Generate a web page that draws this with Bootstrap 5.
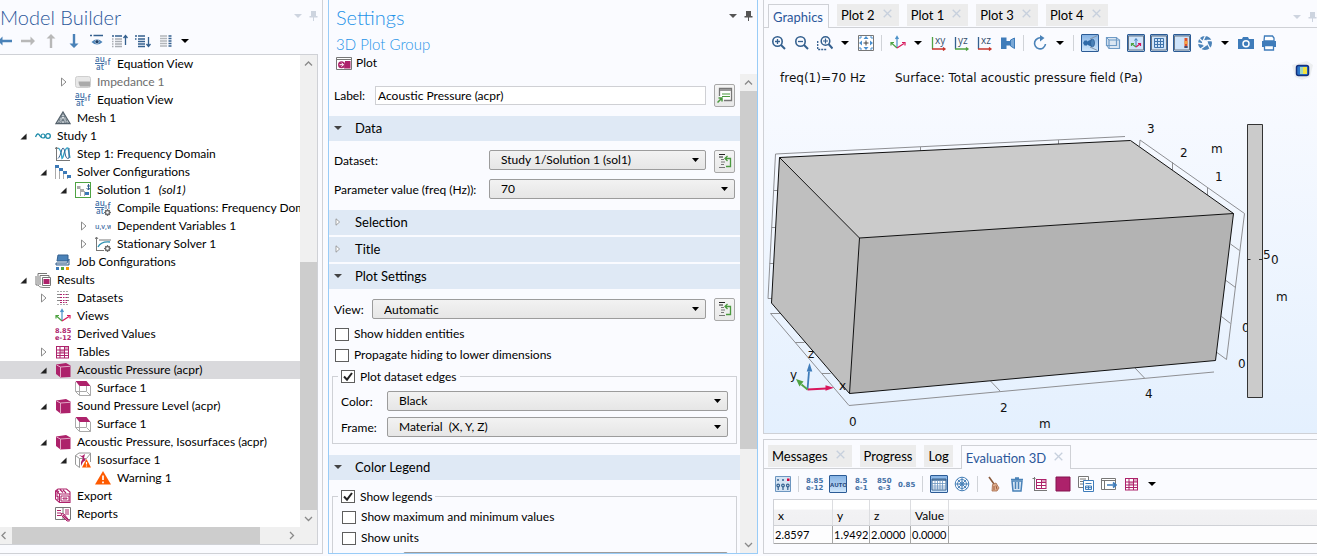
<!DOCTYPE html>
<html lang="en">
<head>
<meta charset="utf-8">
<meta name="viewport" content="width=device-width, initial-scale=1">
<title>Model Builder</title>
<link href="https://cdn.jsdelivr.net/npm/bootstrap@5.3.0/dist/css/bootstrap.min.css" rel="stylesheet">
<style>
:root{--line:#cfd1d6;--blue:#4a82b8;--navy:#34608f;--mag:#ad226b;--pane:#fafbff}
body{font:12px/18px Lato,"Open Sans",sans-serif;color:#000;background:var(--pane);overflow:hidden}
svg{display:block;flex:none}
button{color:inherit}
.ic{width:16px;height:16px}
.workspace{height:100vh;display:grid;grid-template-columns:minmax(0,323fr) minmax(0,430fr) minmax(0,554fr);gap:5px;padding-bottom:2px}
.pane{background:var(--pane);min-height:0;overflow:hidden}
.pane-title{font-size:20px;line-height:34px;font-weight:300;margin:0}
.corner{gap:7px;height:32px}
.flatbtn{border:0;background:none;padding:0;display:flex;align-items:center;justify-content:center;flex:none}
.faded{color:#cdd4df}

/* model tree */
.builder{border-right:1px solid var(--line);border-bottom:1px solid var(--line);padding:0 4px 8px 0}
.builder .pane-title{color:#2b579a}
.builder-tools{height:14px;gap:7px;margin-left:-3px}
.treebox{border:1px solid var(--line);border-left:0;background:#fff;margin-top:6px;min-height:0}
.tree{overflow:hidden;list-style:none;min-width:0}
.tree li{height:18px;white-space:nowrap}
.tree li.on{background:#d9d9dc}
.tree li.off{color:#6d6d6d}
.lv0{padding-left:18px}.lv1{padding-left:38px}.lv2{padding-left:58px}.lv3{padding-left:78px}
.twist{width:17px;height:18px;flex:none;border:0;background:none;padding:0 6px 0 0;display:flex;align-items:center;justify-content:center}
.tree .ic{margin-right:6px}
.vbar{width:17px;background:#f0f0f0;flex:none}
.hbar{height:17px;background:#f0f0f0;flex:none}
.thumb{background:#cdcdcd}
.arrowcell{width:17px;height:17px;color:#8a8a8a}

/* settings */
.settings{border:1px solid #99ccf7;border-top:0}
.settings .pane-title{color:#1f93e8}
.subtitle{font-size:15px;line-height:20px;font-weight:300;color:#1f93e8;margin:0}
.form-area{overflow:hidden;padding-top:10px;min-width:0}
.line{display:flex;padding:0 5px;gap:8px}
.line label{height:20px;line-height:22px}
.sect{height:25px;background:#dfe9f5;font-size:13px;gap:13px;padding:0 4px 0 5px;margin:0 0 2px;width:100%;border:0;display:flex;align-items:center}
.sect svg{width:8px;height:8px}
.drop{height:20px;border:1px solid #9c9c9c;border-radius:2px;padding:0 20px 0 11px;font-size:12px;line-height:17px;color:#000;background:url("data:image/svg+xml,%3Csvg xmlns='http://www.w3.org/2000/svg' width='7' height='4'%3E%3Cpath d='M0 0h7L3.5 4z'/%3E%3C/svg%3E") no-repeat right 6px center,linear-gradient(#f2f2f2,#e6e6e6);min-width:0}
.namebox{height:19px;border:1px solid #cfd0d4;border-radius:0;padding:0 2px;font-size:12px;line-height:17px;color:#000;background:#fff;min-width:0;outline:0}
.sidebtn{width:21px;height:23px;border:1px solid #a8a8a8;border-radius:2px;background:linear-gradient(#f4f4f4,#e9e9e9)}
.tick{height:21px;display:flex;align-items:center;gap:5px;padding-left:6px}
.tick input,.grp legend input{appearance:none;width:14px;height:13px;border:1px solid #5e5e5e;background:#fff;margin:0;flex:none}
input.chk:checked{background:#fff url("data:image/svg+xml,%3Csvg xmlns='http://www.w3.org/2000/svg' width='12' height='11'%3E%3Cpath d='M2 5.5l3 3.2L10 2' fill='none' stroke='%23222' stroke-width='2'/%3E%3C/svg%3E") center no-repeat}
.grp{border:1px solid var(--line);margin:0 3px;padding:0 8px 6px 5px}
.grp legend{float:none;width:auto;font-size:12px;line-height:16px;height:16px;padding:0 3px;margin:0 0 6px;display:flex;align-items:center;gap:5px}
.grp .line{padding:0 0 0 3px;gap:0}
.grp .tick{padding-left:4px}
.w46{width:46px;flex:none}.w38{width:38px;flex:none}.w155{width:155px;flex:none}.w41{width:41px;flex:none}.w66{width:62px;flex:none}

/* graphics and evaluation */
.right{display:grid;grid-template-rows:minmax(0,434fr) minmax(0,115fr);gap:5px;min-height:0;min-width:0}
.gfx{border-left:1px solid var(--line);border-bottom:1px solid var(--line)}
.eval{border-left:1px solid var(--line);border-top:1px solid var(--line);border-bottom:1px solid var(--line)}
.tabrow{border-bottom:1px solid var(--line);padding:4px 4px 0;gap:8px;height:28px;flex:none}
.eval .tabrow{height:29px;padding-top:5px}
.ptab{height:22px;background:#ececec;border:0;font-size:13px;line-height:22px;padding:0 7px 0 4px;display:flex;align-items:center;justify-content:space-between;gap:8px;white-space:nowrap;border-radius:0;color:#000;min-width:61px}
.ptab.short{min-width:0;padding-right:4px}
.ptab svg{width:9px;height:9px;margin-bottom:3px;color:#c7d0dd}
.ptab.active{height:24px;background:var(--pane);border:1px solid var(--line);border-bottom:0;color:#2b579a;margin-bottom:-1px;padding-right:4px}
.eval .ptab.active{padding-right:7px}
.tools{height:30px;padding-left:3px;flex:none}
.eval .tools{padding-left:7px}
.cell{width:23px;height:20px}
.cell.cr{width:18px}
.rule{width:9px;height:16px;background:linear-gradient(#d0d3d8,#d0d3d8) center/1px 16px no-repeat;flex:none}
.press svg{width:18px;height:18px;border:1px solid #2b5b96;border-radius:1px;background:linear-gradient(#86b3e4,#cfe6fb)}
.canvas{flex:1;min-height:0;background:linear-gradient(#fafbff,#e4f0fe)}
.canvas svg{width:100%;height:100%}
.plottext{font:12px "DejaVu Sans",sans-serif}
.gridwrap{margin-left:9px;border-left:1px solid var(--line);border-top:1px solid var(--line);background:#fff}
.values{border-collapse:separate;border-spacing:0;width:100%;table-layout:fixed}
.values th{font-weight:400;height:26px;padding:6px 4px 0;border-right:1px solid #dcdde0;border-bottom:1px solid var(--line);background:linear-gradient(#fff 35%,#f2f2f4 42%,#f0f0f2);line-height:18px}
.values td{height:18px;padding:0 1px;border-right:1px solid #a5a5a5;border-bottom:1px solid #a5a5a5;font-size:11px;line-height:17px;background:#fdfdfe}
.values th:last-child,.values td:last-child{border-right:0}
.c1{width:59px}.c2{width:37px}.c3{width:41px}.c4{width:38px}
</style>
</head>
<body>
<svg width="0" height="0" class="position-absolute" aria-hidden="true">
<defs>
<symbol id="caret" viewBox="0 0 8 8"><path d="M0 2h8L4 6z" fill="currentColor"/></symbol>
<symbol id="pin" viewBox="0 0 9 10"><path d="M2 0h5v5h1.500v1.500H5V10H4V6.500H.5V5H2z" fill="currentColor"/></symbol>
<symbol id="x" viewBox="0 0 9 9"><path d="M.7.7l7.600 7.600M8.300.7L.7 8.300" stroke="currentColor" stroke-width="1.300"/></symbol>
<symbol id="open" viewBox="0 0 8 8"><path d="M7.500.5v7H.5z" fill="#222"/></symbol>
<symbol id="shut" viewBox="0 0 8 10"><path d="M1.500 1v8L6 5z" fill="#fff" stroke="#8b8b8b"/></symbol>
<symbol id="up" viewBox="0 0 17 17"><path d="M5 10.500L8.500 7l3.500 3.500" fill="none" stroke="currentColor" stroke-width="1.300"/></symbol>
<symbol id="down" viewBox="0 0 17 17"><path d="M5 7l3.500 3.500L12 7" fill="none" stroke="currentColor" stroke-width="1.300"/></symbol>
<symbol id="left" viewBox="0 0 17 17"><path d="M10.500 5L7 8.500l3.500 3.500" fill="none" stroke="currentColor" stroke-width="1.300"/></symbol>
<symbol id="right" viewBox="0 0 17 17"><path d="M7 5l3.500 3.500L7 12" fill="none" stroke="currentColor" stroke-width="1.300"/></symbol>
<symbol id="arr" viewBox="0 0 16 16"><path d="M1 8l4.500-4.500v3.300H15v2.400H5.500v3.300z" fill="currentColor"/></symbol>
<symbol id="eye" viewBox="0 0 16 16"><path d="M1 2.500h2M4.500 2.500H14" stroke="#34608f" stroke-width="1.500"/><path d="M2.500 9Q8 3.500 13.500 9 8 14 2.500 9z" fill="#4a82b8"/><circle cx="8" cy="8.700" r="2" fill="#1e3f66" stroke="#dfe9f5" stroke-width=".6"/></symbol>
<symbol id="listup" viewBox="0 0 16 16"><path d="M0 3h2m1 0h7" stroke="#34608f" stroke-width="1.500"/><path d="M3 6h7M3 8.500h7M3 11h7M3 13.500h7M0 6h1.500M0 8.500h1.500M0 11h1.500M0 13.500h1.500" stroke="#a9adb3" stroke-width="1.300"/><path d="M13.500 12V3M11.500 5l2-2.500 2 2.500" fill="none" stroke="#34608f" stroke-width="1.300"/></symbol>
<symbol id="listdown" viewBox="0 0 16 16"><path d="M0 3h2m1 0h7M3 6h7M3 8.500h7M3 11h7M3 13.500h7M0 6h1.500" stroke="#34608f" stroke-width="1.400"/><path d="M13.500 4v9M11.500 11l2 2.500 2-2.500" fill="none" stroke="#34608f" stroke-width="1.300"/></symbol>
<symbol id="cols" viewBox="0 0 16 16"><path d="M2 3h7M2 5.500h7M2 8h7M2 10.500h7M2 13h7" stroke="#b3b6ba" stroke-width="1.300"/><path d="M10.500 3h3M10.500 5.500h3M10.500 8h3M10.500 10.500h3M10.500 13h3" stroke="#34608f" stroke-width="1.500"/></symbol>
<symbol id="eq" viewBox="0 0 16 16"><g font-family="Open Sans" font-weight="600" font-size="8" fill="#4470a6"><text x="0" y="6">au</text><text x="1" y="14">at</text><text x="12.500" y="9">f</text></g><path d="M0 7.500h9M9.500 6h2.500M9.500 8h2.500" stroke="#4470a6"/></symbol>
<symbol id="gear" viewBox="0 0 6 6"><circle cx="3" cy="3" r="1.800" fill="#fff" stroke="#6e6e6e" stroke-width="1.300"/><path d="M3 0v1M3 5v1M0 3h1M5 3h1M1 1l.6.6M5 5l-.6-.6M5 1l-.6.6M1 5l.6-.6" stroke="#6e6e6e"/></symbol>
<symbol id="imp" viewBox="0 0 16 16"><rect x=".5" y="2.500" width="15" height="11" rx="2" fill="#e8e8e8" stroke="#cfcfcf"/><path d="M3.500 7.500h11.500v5H5q-1.500-2-1.500-5z" fill="#aaa"/></symbol>
<symbol id="mesh" viewBox="0 0 16 16"><path d="M8 2L15 13.500H1z" fill="#dce2e6" stroke="#53606b" stroke-width="1.300"/><path d="M5.700 6.500h4.600M3.500 10h9M8 3l-2 4 2 3 2-3zM5.500 7l-2 6L8 10l4.500 3.500-2-6M6 13l2-3 2 3" fill="none" stroke="#66737e" stroke-width=".8"/></symbol>
<symbol id="study" viewBox="0 0 16 16"><path d="M.5 9Q2.500 3.500 5 8q1 1.500 2 1.500" fill="none" stroke="#1b8aa8" stroke-width="1.300"/><circle cx="8" cy="8" r="2" fill="none" stroke="#1b8aa8" stroke-width="1.200"/><circle cx="13" cy="8" r="2.300" fill="none" stroke="#1b8aa8" stroke-width="1.300"/></symbol>
<symbol id="step" viewBox="0 0 16 16"><path d="M1.500 1v14M0 3l1.500-2L3 3M1 14.500h14" fill="none" stroke="#777"/><path d="M3 2q3 1 4 10.500Q8 12 9 7.500 11 1 13 2l2 10" fill="none" stroke="#35a5c8" stroke-width="1.300"/><path d="M3 12.500Q5 11 7 3q2-3 3 4t4 5V2" fill="none" stroke="#34608f"/></symbol>
<symbol id="solvers" viewBox="0 0 16 16"><path d="M.5 3v12M4.500 5v10M8.500 7v8M12.500 11v4" stroke="#aaa"/><path d="M0 1h4v3H0zM4 4h4v3H4zM8 7h4v3H8zM12 11h4v3h-4z" fill="#3b79b7"/></symbol>
<symbol id="solution" viewBox="0 0 16 16"><rect x=".5" y=".5" width="15" height="15" fill="#fff" stroke="#4fa342"/><path d="M5.500 7v7M9.500 9v5" stroke="#aaa"/><path d="M2 4h3.500v3H2zM5.500 7H9v3H5.500z" fill="#aaa"/><path d="M10 10h4v3h-4z" fill="#3b79b7"/><path d="M13.500 2v6M12 4h3M11.500 6l2 2 1.500-2" stroke="#34608f" fill="none"/></symbol>
<symbol id="uvw" viewBox="0 0 16 16"><text x="0" y="10.500" font-family="Open Sans" font-size="7" font-weight="600" fill="#4470a6">u,v,w</text></symbol>
<symbol id="stat" viewBox="0 0 16 16"><path d="M1.500 1v14M0 3l1.500-2L3 3M1 14.500h8M4 4h12" fill="none" stroke="#777"/><path d="M3 11Q6 5 15 6" fill="none" stroke="#2d8fb0" stroke-width="1.300"/></symbol>
<symbol id="job" viewBox="0 0 16 16"><path d="M3 1h10v6H2z" fill="#4a82b8" stroke="#34608f"/><path d="M1 9h11l2-4v6H1z" fill="#d8dce2" stroke="#34608f"/><path d="M1 13h3v3H1z" fill="#3b79b7"/><path d="M6 13h3v3H6z" fill="#4fa342"/><path d="M11 13h3v3h-3z" fill="#f29a00"/></symbol>
<symbol id="results" viewBox="0 0 16 16"><path d="M1 4v9h3M3 12V1.500h9M5 13V3.500h9V6" fill="none" stroke="#777"/><path d="M7.500 5.500h8v8h-8z" fill="#fff" stroke="#777"/><path d="M8.500 7h6v5h-6z" fill="#ad226b"/><path d="M3 13q1 2.500 5 2.500h7" stroke="#888" fill="none"/></symbol>
<symbol id="datasets" viewBox="0 0 16 16"><path d="M2 4.500h3M2 7.500h3M2 10.500h3M12 4.500h2M12 7.500h2M12 10.500h2" stroke="#888"/><path d="M5 4.500h2M8 4.500h1.500M10.500 4.500h1.500M5 7.500h2M8 7.500h1.500M10.500 7.500h1.500M5 10.500h2M8 10.500h1.500M10.500 10.500h1.500M5 12.500h2M8 12.500h1.500M10.500 12.500h1.500" stroke="#ad226b"/><path d="M2 1.500h12M2 14.500h12" stroke="#aaa" stroke-dasharray="2 1"/></symbol>
<symbol id="axes" viewBox="0 0 16 16"><path d="M7 12V2M5.500 4L7 1.500 8.500 4" fill="none" stroke="#4a90c8" stroke-width="1.200"/><path d="M7 13L1.500 8M1 10.500V7.500H4" fill="none" stroke="#4fa342" stroke-width="1.200"/><path d="M7 13l7-4.500M12 7.500h3v3" fill="none" stroke="#d8175c" stroke-width="1.200"/></symbol>
<symbol id="derived" viewBox="0 0 17 16"><g font-family="DejaVu Sans" font-size="7" font-weight="bold" fill="#ad226b"><text x="0" y="7">8.85</text><text x="0" y="14">e-12</text></g></symbol>
<symbol id="tbl" viewBox="0 0 16 16"><path d="M1 2h13v12.500H1z" fill="#ad226b"/><path d="M2 6.500h2.500V8.500H2zM2 9.500h2.500v1.500H2zM2 12h2.500v1.500H2zM5.500 9.500H9v1.500H5.500zM5.500 12H9v1.500H5.500zM10 6.500h3V8.500h-3zM10 9.500h3v1.500h-3zM10 12h3v1.500h-3zM2 3h2.500v2.500H2zM5.500 3H9v2.500H5.500z" fill="#fff"/><path d="M10 3h3v2.500h-3zM5.500 6.500H9v2H5.500z" fill="#dda5c2"/></symbol>
<symbol id="cube" viewBox="0 0 16 16"><path d="M1 2.500L11 1l4.500 2.500v11.500l-10 .5L1 12z" fill="#ad226b"/><path d="M1.500 3l4 2v10M5.500 5l9.500-.7" fill="none" stroke="#e6b6cf" stroke-width=".9"/></symbol>
<symbol id="surf" viewBox="0 0 16 16"><path d="M.5 2v9.500l4 4V6M4.500 15.500h11V6M.5 11.500h11l4 4M11.500 11V6" fill="none" stroke="#aaa"/><path d="M.5 1h11l4 5h-11z" fill="#ad226b"/></symbol>
<symbol id="iso" viewBox="0 0 16 16"><path d="M.5 3.500v9l4 3V6.500zM.5 3.500L4 1h11.500v9M4.500 6.500h7l4-5M4.500 15V7" fill="none" stroke="#999"/><path d="M4 3l3 1 3-2-1 4 2 2-3 2-2 4v-4l2-4z" fill="#ad226b"/><path d="M11.500 7L16 15.500H7z" fill="#fe5a00"/><path d="M11.500 10v2.500m0 1v1" stroke="#fff" stroke-width="1.200"/></symbol>
<symbol id="warn" viewBox="0 0 16 16"><path d="M8 1l8 13.500H0z" fill="#fe5a00"/><path d="M8 5.500v4.500m0 1.500v1.800" stroke="#fff" stroke-width="1.700"/></symbol>
<symbol id="export" viewBox="0 0 16 16"><path d="M.5 3L3 1h8.500L15 4v10.500H4.500L.5 11zM.5 3l4 3h10M4.500 6v8.500M2 2.500l2 1.500M5 1.500l3 3M8 2l3 3M2 5v4M3 8v4" fill="none" stroke="#ad226b" stroke-width="1.100"/><path d="M6 8h8v5H6zM8 10h4v1H8z" fill="#fff" stroke="#ad226b"/></symbol>
<symbol id="reports" viewBox="0 0 16 16"><path d="M.5 1.500h15v12H.5zM8 2v11" fill="#fff" stroke="#777"/><path d="M2 4.500h4M2 7h4M2 9.500h4M10 4h4M10 6h4M10 8h4" stroke="#ad226b"/><path d="M6 7.500l3 .5 5.500 7H12L7 10z" fill="#fff" stroke="#ad226b"/><path d="M8 9l5 5" stroke="#ad226b" stroke-width="1.500"/></symbol>
<symbol id="plot" viewBox="0 0 16 13"><path d="M.5.5h15v12H.5z" fill="#fff" stroke="#777"/><path d="M1 2.500h14" stroke="#777"/><path d="M9 4h5.500v7.500H8z" fill="#ad226b"/><circle cx="5.500" cy="7.700" r="3.500" fill="#ad226b"/><path d="M3.500 7.700h4M5.500 5.700l2 2-2 2" stroke="#fff" fill="none"/></symbol>
<symbol id="goto" viewBox="0 0 16 16"><path d="M2.500 9V1.500h12v12H7" fill="#fff" stroke="#777" stroke-width="1.300"/><path d="M3 3h11" stroke="#999" stroke-width="2"/><path d="M5 7h8M5 9.500h8" stroke="#4b9a3f" stroke-width="1.200"/><path d="M.5 15.500l4-4M1.500 11h3.500v3.500" fill="none" stroke="#4b9a3f" stroke-width="1.500"/></symbol>
<symbol id="jump" viewBox="0 0 16 16"><path d="M2 1.500h6M2 4h4" stroke="#222"/><path d="M4 6.500h3M4 9h4M4 11.500h3M2 14.500h6" stroke="#777"/><path d="M9 13.500h4.500V5.500H8.500M10.500 3l-2.500 2.500L10.500 8" fill="none" stroke="#4b9a3f" stroke-width="1.300"/></symbol>
<symbol id="zin" viewBox="0 0 16 16"><circle cx="6.500" cy="6.500" r="4.700" fill="none" stroke="#34608f" stroke-width="1.600"/><path d="M10 10l4 4" stroke="#34608f" stroke-width="2"/><path d="M4 6.500h5M6.500 4v5" stroke="#34608f" stroke-width="1.300"/></symbol>
<symbol id="zout" viewBox="0 0 16 16"><circle cx="6.500" cy="6.500" r="4.700" fill="none" stroke="#34608f" stroke-width="1.600"/><path d="M10 10l4 4" stroke="#34608f" stroke-width="2"/><path d="M4 6.500h5" stroke="#34608f" stroke-width="1.300"/></symbol>
<symbol id="zbox" viewBox="0 0 16 16"><path d="M.7 6v8.500h9" fill="none" stroke="#34608f" stroke-width="1.300" stroke-dasharray="2 1"/><circle cx="8.500" cy="6" r="4.300" fill="none" stroke="#34608f" stroke-width="1.500"/><path d="M11.500 9l4 4.500" stroke="#34608f" stroke-width="2"/><path d="M6 6h5M8.500 3.500v5" stroke="#34608f" stroke-width="1.200"/></symbol>
<symbol id="fit" viewBox="0 0 16 16"><path d="M.5.5h15v15H.5z" fill="#fff" stroke="#777"/><path d="M8 5.500v5M5.500 8h5" stroke="#444"/><path d="M8 1l2.500 3h-5zM8 15l2.500-3h-5zM1 8l3-2.500v5zM15 8l-3-2.500v5z" fill="#4a90d0"/><path d="M2 4V2h2M12 2h2v2M2 12v2h2M14 12v2h-2" fill="none" stroke="#4a90d0"/></symbol>
<symbol id="xy" viewBox="0 0 16 16"><path d="M1.500 2v12" stroke="#4fa342" stroke-width="1.300"/><path d="M1 14h13M12 12.500l2 1.500-2 1.500" fill="none" stroke="#c8362c" stroke-width="1.300"/><text x="4" y="9" font-family="Open Sans" font-size="10" fill="#34506e">xy</text></symbol>
<symbol id="yz" viewBox="0 0 16 16"><path d="M1.500 2v12" stroke="#34608f" stroke-width="1.300"/><path d="M1 14h13M12 12.500l2 1.500-2 1.500" fill="none" stroke="#4fa342" stroke-width="1.300"/><text x="4" y="9" font-family="Open Sans" font-size="10" fill="#34506e">yz</text></symbol>
<symbol id="xz" viewBox="0 0 16 16"><path d="M1.500 2v12" stroke="#34608f" stroke-width="1.300"/><path d="M1 14h13M12 12.500l2 1.500-2 1.500" fill="none" stroke="#c8362c" stroke-width="1.300"/><text x="4" y="9" font-family="Open Sans" font-size="10" fill="#34506e">xz</text></symbol>
<symbol id="cam" viewBox="0 0 16 16"><path d="M1 2.500h5.500v11.500H1zM6 6h5v4.500H6z" fill="#3f7cba"/><path d="M10.500 5l4-2v10.500l-4-2.500z" fill="#7aa8d6" stroke="#3f7cba"/></symbol>
<symbol id="turn" viewBox="0 0 16 16"><path d="M10 3.200A5.500 5.500 0 1 0 13.500 9" fill="none" stroke="#4a82b8" stroke-width="1.600"/><path d="M8 0l4.500 3L8 6.500z" fill="#4a82b8"/></symbol>
<symbol id="light" viewBox="0 0 16 16"><path d="M1 8l1.500-2.500H5V10.500H2.500zM5 6.500L10 4v8L5 9.500z" fill="#2f6aa8"/><ellipse cx="10.500" cy="8" rx="2" ry="3.800" fill="#4a82b8" stroke="#2f5f95" stroke-width=".8"/><path d="M8 4l7.500-3.500M8 12l7.500 3.500" stroke="#8797a8"/></symbol>
<symbol id="transp" viewBox="0 0 16 16"><path d="M1.500 2.500h10v8h-10zM4 5h10.500v8.500H4z" fill="#dbe6f2" stroke="#6f9bc6" stroke-width="1.200"/><path d="M1.500 2.500L4 5M11.500 2.500l3 2.500M1.500 10.500l2.500 3" stroke="#6f9bc6"/></symbol>
<symbol id="axesin" viewBox="0 0 16 16"><path d="M.5 1h15v14H.5z" fill="#cfe4fa" stroke="#6b7785"/><path d="M8 11V4M6.500 5.500L8 3.500l1.500 2" fill="none" stroke="#3f7cba"/><path d="M8 12L4 9M3.500 11V8.500H6" fill="none" stroke="#4fa342" stroke-width="1.200"/><path d="M8 12l4-3M10 8.500h2.500V11" fill="none" stroke="#d8175c" stroke-width="1.200"/></symbol>
<symbol id="gridic" viewBox="0 0 16 16"><path d="M.5 1h15v14H.5z" fill="#cfe4fa" stroke="#6b7785"/><path d="M3.500 3.500h9v9h-9zM6.500 3.500v9M9.500 3.500v9M3.500 6.500h9M3.500 9.500h9" fill="none" stroke="#3f74ac"/></symbol>
<symbol id="leg" viewBox="0 0 16 16"><path d="M.5 1h15v14H.5z" fill="#cfe4fa" stroke="#6b7785"/><path d="M10.500 3h3v10h-3z" fill="#e0532c"/><path d="M10.500 6h3v3h-3z" fill="#f6a244"/><path d="M10.500 11h3v2h-3z" fill="#3c4f7a"/></symbol>
<symbol id="scene" viewBox="0 0 16 16"><circle cx="8" cy="8" r="5" fill="none" stroke="#4a82b8" stroke-width="4"/><path d="M6 6L8.500.5M9.500 5.500l6 0M10.500 8.500l2.500 5M8.500 10.500l-5 3.500M5.500 9L.5 8M6 7L2 3" stroke="#fafbff" stroke-width="1.300"/></symbol>
<symbol id="photo" viewBox="0 0 16 16"><path d="M0 4h4l1-2h5l1 2h5v10H0z" fill="#3f7cba"/><circle cx="8" cy="8.800" r="3" fill="#3f7cba" stroke="#fff" stroke-width="1.500"/></symbol>
<symbol id="print" viewBox="0 0 16 16"><path d="M3.500 1h8l1.500 2v3h-10z" fill="#fff" stroke="#3f7cba" stroke-width="1.300"/><path d="M1 6h14v6H1z" fill="#3f7cba"/><path d="M3.500 10.500h9V15h-9z" fill="#fff" stroke="#3f7cba" stroke-width="1.300"/></symbol>
<symbol id="evopts" viewBox="0 0 16 16"><path d="M.5.5h15v15H.5z" fill="#d4e3f3" stroke="#6c96c0"/><path d="M2 4h2M7 4h2" stroke="#34608f" stroke-width="1.500"/><path d="M12 2.500h2.500v2.500H12z" fill="#d8003a"/><g fill="none" stroke="#34608f" stroke-width="1.200"><circle cx="3.200" cy="9.500" r="1.300"/><circle cx="8" cy="9.500" r="1.300"/><circle cx="12.800" cy="9.500" r="1.300"/><path d="M3.200 11v3M8 11v3M12.800 11v3"/></g></symbol>
<symbol id="n1" viewBox="0 0 18 16"><g font-family="DejaVu Sans" font-size="7" font-weight="bold" fill="#4470a6"><text x="0" y="7">8.85</text><text x="0" y="14">e-12</text></g></symbol>
<symbol id="auto" viewBox="0 0 16 16"><text x="0" y="11" font-family="Open Sans" font-size="6" font-weight="bold" fill="#1f467a">AUTO</text></symbol>
<symbol id="n2" viewBox="0 0 18 16"><g font-family="DejaVu Sans" font-size="7" font-weight="bold" fill="#4470a6"><text x="3" y="7">8.5</text><text x="3" y="14">e-1</text></g></symbol>
<symbol id="n3" viewBox="0 0 18 16"><g font-family="DejaVu Sans" font-size="7" font-weight="bold" fill="#4470a6"><text x="2" y="7">850</text><text x="3" y="14">e-3</text></g></symbol>
<symbol id="n4" viewBox="0 0 18 16"><text x="0" y="11" font-family="DejaVu Sans" font-size="7" font-weight="bold" fill="#4470a6">0.85</text></symbol>
<symbol id="tgrid" viewBox="0 0 16 16"><path d="M1 3h14v11H1z" fill="#fff" stroke="#34608f"/><path d="M1 4h14" stroke="#34608f" stroke-width="1.500"/><path d="M4 4v10M6.500 4v10M9 4v10M11.500 4v10M1 7.500h14M1 10h14M1 12h14" stroke="#6c96c0" stroke-width=".8"/></symbol>
<symbol id="globe" viewBox="0 0 16 16"><g fill="none" stroke="#4a82b8"><circle cx="8" cy="8" r="6.800"/><circle cx="8" cy="8" r="4.500"/><circle cx="8" cy="8" r="2"/><path d="M8 1v14M1 8h14M3 3l10 10M13 3L3 13"/></g></symbol>
<symbol id="broom" viewBox="0 0 16 16"><path d="M3 1l5 7" stroke="#8a5a3c" stroke-width="1.600"/><path d="M6.500 8.500L10 7l3 5-2 3H6z" fill="#dfae8e" stroke="#a5694a" stroke-width=".8"/><path d="M8 10v4M10 9.500l1 4" stroke="#9c5a3c"/></symbol>
<symbol id="trash" viewBox="0 0 16 16"><path d="M3 5h10l-1 10H4z" fill="#dbe8f5" stroke="#4a82b8" stroke-width="1.500"/><path d="M2 3.500h12M6 2h4M6.500 6v7M9.500 6v7" stroke="#4a82b8" stroke-width="1.500"/></symbol>
<symbol id="tgraph" viewBox="0 0 16 16"><path d="M2.500 1v14M.5 2.500h3M2 14.500h13" fill="none" stroke="#777"/><path d="M4 3h10.500v10H4z" fill="#ad226b"/><path d="M5 4h4v2H5zM5 7h4v2H5zM5 10h4v2H5zM10 7h3.500v2H10zM10 10h3.500v2H10z" fill="#fff"/><path d="M10 4h3.500v2H10z" fill="#dda5c2"/></symbol>
<symbol id="sq" viewBox="0 0 16 16"><path d="M1 1h14v14H1z" fill="#ad226b" stroke="#841550"/></symbol>
<symbol id="copy" viewBox="0 0 16 16"><path d="M.5.5h10v11H.5z" fill="#fff" stroke="#777"/><path d="M2 3h6M2 5.500h5M2 8h4" stroke="#777"/><path d="M5.500 4.500h10v11h-10z" fill="#fff" stroke="#3f7cba"/><path d="M7.500 7.500h6M7.500 10h6v3.500h-6zM10.500 10v3.500M7.500 11.700h6" fill="none" stroke="#3f7cba"/></symbol>
<symbol id="exp" viewBox="0 0 16 16"><path d="M.5 2.500h14v11H.5zM.5 4.500h14M3.500 4.500v9" fill="#fff" stroke="#777"/><path d="M6 9h9M12 6.500L15 9l-3 2.500" fill="none" stroke="#3f7cba" stroke-width="1.700"/></symbol>
</defs>
</svg>

<main class="workspace">
  <section class="pane builder d-flex flex-column" aria-label="Model Builder">
    <header class="d-flex justify-content-between">
      <h1 class="pane-title">Model Builder</h1>
      <div class="corner d-flex align-items-center faded"><button class="flatbtn faded" aria-label="Window menu"><svg width="8" height="8"><use href="#caret"/></svg></button><button class="flatbtn faded" aria-label="Pin"><svg width="9" height="10"><use href="#pin"/></svg></button></div>
    </header>
    <div class="builder-tools d-flex align-items-center">
      <button class="flatbtn" aria-label="Back" style="color:#4a82b8"><svg class="ic"><use href="#arr"/></svg></button>
      <button class="flatbtn" aria-label="Forward" style="color:#b8b8b8"><svg class="ic" viewBox="0 0 16 16"><use href="#arr" width="16" height="16" transform="rotate(180 8 8)"/></svg></button>
      <button class="flatbtn" aria-label="Move up" style="color:#b8b8b8"><svg class="ic" viewBox="0 0 16 16"><use href="#arr" width="16" height="16" transform="rotate(90 8 8)"/></svg></button>
      <button class="flatbtn" aria-label="Move down" style="color:#4a82b8"><svg class="ic" viewBox="0 0 16 16"><use href="#arr" width="16" height="16" transform="rotate(270 8 8)"/></svg></button>
      <button class="flatbtn" aria-label="Show"><svg class="ic"><use href="#eye"/></svg></button>
      <button class="flatbtn" aria-label="Collapse all"><svg class="ic"><use href="#listup"/></svg></button>
      <button class="flatbtn" aria-label="Expand all"><svg class="ic"><use href="#listdown"/></svg></button>
      <button class="flatbtn" aria-label="Node text"><svg class="ic"><use href="#cols"/></svg></button>
      <button class="flatbtn" aria-label="More"><svg width="8" height="8"><use href="#caret"/></svg></button>
    </div>
    <div class="treebox d-flex flex-column flex-fill">
      <div class="d-flex flex-fill" style="min-height:0">
        <ul class="tree flex-fill p-0 m-0">
          <li class="lv3 d-flex align-items-center"><span class="twist"></span><svg class="ic"><use href="#eq"/></svg>Equation View</li>
          <li class="lv2 off d-flex align-items-center"><button class="twist" aria-label="Expand"><svg width="8" height="10"><use href="#shut"/></svg></button><svg class="ic"><use href="#imp"/></svg>Impedance 1</li>
          <li class="lv2 d-flex align-items-center"><span class="twist"></span><svg class="ic"><use href="#eq"/></svg>Equation View</li>
          <li class="lv1 d-flex align-items-center"><span class="twist"></span><svg class="ic"><use href="#mesh"/></svg>Mesh 1</li>
          <li class="lv0 d-flex align-items-center"><button class="twist" aria-label="Collapse"><svg width="7" height="7"><use href="#open"/></svg></button><svg class="ic"><use href="#study"/></svg>Study 1</li>
          <li class="lv1 d-flex align-items-center"><span class="twist"></span><svg class="ic"><use href="#step"/></svg>Step 1: Frequency Domain</li>
          <li class="lv1 d-flex align-items-center"><button class="twist" aria-label="Collapse"><svg width="7" height="7"><use href="#open"/></svg></button><svg class="ic"><use href="#solvers"/></svg>Solver Configurations</li>
          <li class="lv2 d-flex align-items-center"><button class="twist" aria-label="Collapse"><svg width="7" height="7"><use href="#open"/></svg></button><svg class="ic"><use href="#solution"/></svg>Solution 1<i class="ps-2">(sol1)</i></li>
          <li class="lv3 d-flex align-items-center"><span class="twist"></span><svg class="ic" viewBox="0 0 16 16"><use href="#eq" width="16" height="16"/><use href="#gear" x="9" y="9" width="7" height="7"/></svg>Compile Equations: Frequency Domain</li>
          <li class="lv3 d-flex align-items-center"><button class="twist" aria-label="Expand"><svg width="8" height="10"><use href="#shut"/></svg></button><svg class="ic"><use href="#uvw"/></svg>Dependent Variables 1</li>
          <li class="lv3 d-flex align-items-center"><button class="twist" aria-label="Expand"><svg width="8" height="10"><use href="#shut"/></svg></button><svg class="ic" viewBox="0 0 16 16"><use href="#stat" width="16" height="16"/><use href="#gear" x="9" y="9" width="7" height="7"/></svg>Stationary Solver 1</li>
          <li class="lv1 d-flex align-items-center"><span class="twist"></span><svg class="ic"><use href="#job"/></svg>Job Configurations</li>
          <li class="lv0 d-flex align-items-center"><button class="twist" aria-label="Collapse"><svg width="7" height="7"><use href="#open"/></svg></button><svg class="ic"><use href="#results"/></svg>Results</li>
          <li class="lv1 d-flex align-items-center"><button class="twist" aria-label="Expand"><svg width="8" height="10"><use href="#shut"/></svg></button><svg class="ic"><use href="#datasets"/></svg>Datasets</li>
          <li class="lv1 d-flex align-items-center"><span class="twist"></span><svg class="ic"><use href="#axes"/></svg>Views</li>
          <li class="lv1 d-flex align-items-center"><span class="twist"></span><svg class="ic"><use href="#derived"/></svg>Derived Values</li>
          <li class="lv1 d-flex align-items-center"><button class="twist" aria-label="Expand"><svg width="8" height="10"><use href="#shut"/></svg></button><svg class="ic"><use href="#tbl"/></svg>Tables</li>
          <li class="lv1 on d-flex align-items-center"><button class="twist" aria-label="Collapse"><svg width="7" height="7"><use href="#open"/></svg></button><svg class="ic"><use href="#cube"/></svg>Acoustic Pressure (acpr)</li>
          <li class="lv2 d-flex align-items-center"><span class="twist"></span><svg class="ic"><use href="#surf"/></svg>Surface 1</li>
          <li class="lv1 d-flex align-items-center"><button class="twist" aria-label="Collapse"><svg width="7" height="7"><use href="#open"/></svg></button><svg class="ic"><use href="#cube"/></svg>Sound Pressure Level (acpr)</li>
          <li class="lv2 d-flex align-items-center"><span class="twist"></span><svg class="ic"><use href="#surf"/></svg>Surface 1</li>
          <li class="lv1 d-flex align-items-center"><button class="twist" aria-label="Collapse"><svg width="7" height="7"><use href="#open"/></svg></button><svg class="ic"><use href="#cube"/></svg>Acoustic Pressure, Isosurfaces (acpr)</li>
          <li class="lv2 d-flex align-items-center"><button class="twist" aria-label="Collapse"><svg width="7" height="7"><use href="#open"/></svg></button><svg class="ic"><use href="#iso"/></svg>Isosurface 1</li>
          <li class="lv3 d-flex align-items-center"><span class="twist"></span><svg class="ic"><use href="#warn"/></svg>Warning 1</li>
          <li class="lv1 d-flex align-items-center"><span class="twist"></span><svg class="ic"><use href="#export"/></svg>Export</li>
          <li class="lv1 d-flex align-items-center"><span class="twist"></span><svg class="ic"><use href="#reports"/></svg>Reports</li>
        </ul>
        <div class="vbar d-flex flex-column">
          <svg class="arrowcell"><use href="#up"/></svg>
          <div style="flex:190"></div><div class="thumb" style="flex:248"></div>
          <svg class="arrowcell"><use href="#down"/></svg>
        </div>
      </div>
      <div class="hbar d-flex">
        <svg class="arrowcell" style="margin-left:-5px"><use href="#left"/></svg>
        <div class="thumb" style="flex:248"></div><div style="flex:23"></div>
        <svg class="arrowcell"><use href="#right"/></svg><div class="arrowcell"></div>
      </div>
    </div>
  </section>

  <section class="pane settings d-flex flex-column" aria-label="Settings">
    <header class="d-flex justify-content-between" style="padding:0 4px 0 7px">
      <h2 class="pane-title">Settings</h2>
      <div class="corner d-flex align-items-center" style="color:#555"><button class="flatbtn" aria-label="Window menu"><svg width="8" height="8"><use href="#caret"/></svg></button><button class="flatbtn" aria-label="Pin"><svg width="9" height="10"><use href="#pin"/></svg></button></div>
    </header>
    <div class="px-2" style="height:42px"><p class="subtitle" style="margin-left:-1px">3D Plot Group</p><button class="flatbtn gap-1" style="height:18px;margin-left:-1px"><svg width="16" height="13"><use href="#plot"/></svg>Plot</button></div>
    <div class="d-flex flex-fill" style="min-height:0">
      <form class="form-area flex-fill">
        <div class="line align-items-center" style="margin-bottom:9px"><div class="d-flex flex-fill align-items-center"><label for="lbl" class="w41">Label:</label><input id="lbl" class="namebox flex-fill" value="Acoustic Pressure (acpr)"></div><button type="button" class="flatbtn sidebtn" aria-label="Create shortcut"><svg class="ic"><use href="#goto"/></svg></button></div>
        <button type="button" class="sect"><svg style="color:#444"><use href="#caret"/></svg>Data</button>
        <div class="line" style="margin:9px 0 6px"><div class="d-flex flex-fill"><label for="ds" class="w155">Dataset:</label><select id="ds" class="form-select drop flex-fill"><option>Study 1/Solution 1 (sol1)</option></select></div><button type="button" class="flatbtn sidebtn" aria-label="Go to source"><svg class="ic"><use href="#jump"/></svg></button></div>
        <div class="line" style="margin-bottom:11px;gap:0"><label for="pv" class="w155">Parameter value (freq (Hz)):</label><select id="pv" class="form-select drop flex-fill"><option>70</option></select></div>
        <button type="button" class="sect"><svg><use href="#shut"/></svg>Selection</button>
        <button type="button" class="sect"><svg><use href="#shut"/></svg>Title</button>
        <button type="button" class="sect"><svg style="color:#444"><use href="#caret"/></svg>Plot Settings</button>
        <div class="line align-items-center" style="margin:9px 0 3px"><div class="d-flex flex-fill align-items-center"><label for="vw" class="w38">View:</label><select id="vw" class="form-select drop flex-fill"><option>Automatic</option></select></div><button type="button" class="flatbtn sidebtn" aria-label="Go to source"><svg class="ic"><use href="#jump"/></svg></button></div>
        <label class="tick"><input type="checkbox" class="chk">Show hidden entities</label>
        <label class="tick"><input type="checkbox" class="chk">Propagate hiding to lower dimensions</label>
        <fieldset class="grp" style="margin-top:3px;margin-bottom:11px">
          <legend><input type="checkbox" class="chk" id="pe" checked><label for="pe">Plot dataset edges</label></legend>
          <div class="line" style="margin-bottom:6px"><label for="co" class="w46">Color:</label><select id="co" class="form-select drop flex-fill"><option>Black</option></select></div>
          <div class="line"><label for="fr" class="w46">Frame:</label><select id="fr" class="form-select drop flex-fill"><option>Material&nbsp; (X, Y, Z)</option></select></div>
        </fieldset>
        <button type="button" class="sect"><svg style="color:#444"><use href="#caret"/></svg>Color Legend</button>
        <fieldset class="grp" style="margin-top:9px">
          <legend style="margin-bottom:2px"><input type="checkbox" class="chk" id="sl" checked><label for="sl">Show legends</label></legend>
          <label class="tick"><input type="checkbox" class="chk">Show maximum and minimum values</label>
          <label class="tick"><input type="checkbox" class="chk">Show units</label>
          <div class="line" style="padding-top:3px"><span class="w66"></span><select class="form-select drop flex-fill" aria-label="Position"><option>Right</option></select></div>
        </fieldset>
      </form>
      <div class="vbar d-flex flex-column">
        <svg class="arrowcell"><use href="#up"/></svg>
        <div class="thumb" style="flex:356"></div><div style="flex:87"></div>
        <svg class="arrowcell"><use href="#down"/></svg>
      </div>
    </div>
  </section>

  <div class="right">
    <section class="pane gfx d-flex flex-column" aria-label="Graphics">
      <nav class="tabrow d-flex">
        <button class="ptab active">Graphics</button>
        <button class="ptab">Plot 2<svg><use href="#x"/></svg></button>
        <button class="ptab">Plot 1<svg><use href="#x"/></svg></button>
        <button class="ptab">Plot 3<svg><use href="#x"/></svg></button>
        <button class="ptab">Plot 4<svg><use href="#x"/></svg></button>
        <span class="corner d-flex align-items-center faded ms-auto" style="height:26px;margin-right:-4px"><svg width="8" height="8"><use href="#caret"/></svg><svg width="9" height="10"><use href="#pin"/></svg></span>
      </nav>
      <div class="tools d-flex align-items-center">
        <button class="flatbtn cell" aria-label="Zoom in"><svg class="ic"><use href="#zin"/></svg></button>
        <button class="flatbtn cell" aria-label="Zoom out"><svg class="ic"><use href="#zout"/></svg></button>
        <button class="flatbtn cell" aria-label="Zoom box"><svg class="ic"><use href="#zbox"/></svg></button>
        <button class="flatbtn cell cr" aria-label="Zoom menu"><svg width="8" height="8"><use href="#caret"/></svg></button>
        <button class="flatbtn cell" aria-label="Zoom extents"><svg class="ic"><use href="#fit"/></svg></button>
        <span class="rule"></span>
        <button class="flatbtn cell" aria-label="Default view"><svg class="ic"><use href="#axes"/></svg></button>
        <button class="flatbtn cell cr" aria-label="View menu"><svg width="8" height="8"><use href="#caret"/></svg></button>
        <button class="flatbtn cell" aria-label="XY view"><svg class="ic"><use href="#xy"/></svg></button>
        <button class="flatbtn cell" aria-label="YZ view"><svg class="ic"><use href="#yz"/></svg></button>
        <button class="flatbtn cell" aria-label="XZ view"><svg class="ic"><use href="#xz"/></svg></button>
        <button class="flatbtn cell" aria-label="Projection"><svg class="ic"><use href="#cam"/></svg></button>
        <span class="rule"></span>
        <button class="flatbtn cell" aria-label="Rotate"><svg class="ic"><use href="#turn"/></svg></button>
        <button class="flatbtn cell cr" aria-label="Rotate menu"><svg width="8" height="8"><use href="#caret"/></svg></button>
        <span class="rule"></span>
        <button class="flatbtn cell press" aria-label="Scene light"><svg><use href="#light"/></svg></button>
        <button class="flatbtn cell" aria-label="Transparency"><svg class="ic"><use href="#transp"/></svg></button>
        <button class="flatbtn cell press" aria-label="Show axes"><svg><use href="#axesin"/></svg></button>
        <button class="flatbtn cell press" aria-label="Show grid"><svg><use href="#gridic"/></svg></button>
        <button class="flatbtn cell press" aria-label="Show legends"><svg><use href="#leg"/></svg></button>
        <button class="flatbtn cell" aria-label="Environment"><svg class="ic"><use href="#scene"/></svg></button>
        <button class="flatbtn cell cr" aria-label="Environment menu"><svg width="8" height="8"><use href="#caret"/></svg></button>
        <button class="flatbtn cell" aria-label="Snapshot"><svg class="ic"><use href="#photo"/></svg></button>
        <button class="flatbtn cell" aria-label="Print"><svg class="ic"><use href="#print"/></svg></button>
      </div>
      <div class="canvas">
        <svg viewBox="764 58 553 375" preserveAspectRatio="xMinYMin meet" role="img" aria-label="Acoustic pressure surface plot">
          <g fill="none" stroke="#8e8f93">
            <path d="M772 298.500h-4L775.500 154 1125 136.500M773.500 190.500h4M771.500 227.500h4M769.500 263.500h4M920.500 147v4M1058.500 140v4"/>
            <path d="M1139.500 146l.5-6 104.500 73.500-18 146-9.500-7M1172.500 162v8M1207.500 188v8M1239.500 250.500l-9-6.500M1235.500 287.500l-9.500-7M1230.500 323.500l-9-7"/>
            <path d="M780 313.500h-9.500L849 405.500 1214 372M795 342.500h9.500M822 373.500h8.500M1000 391l-9.500-10M1144.500 378l-9.500-10"/>
          </g>
          <path d="M779.500 157.500L1130.500 140.500 1233.500 213.500 859.500 238z" fill="#cbcbcb"/>
          <path d="M779.500 157.500L859.500 238 849.500 393.500 771.500 303z" fill="#bfbfbf"/>
          <path d="M859.500 238L1233.500 213.500 1215.500 360.500 849.500 393.500z" fill="#b3b3b3"/>
          <path d="M859.500 238L779.500 157.500 1130.500 140.500 1233.500 213.500 859.500 238 849.500 393.500 1215.500 360.500 1233.500 213.500M779.500 157.500L771.500 303 849.500 393.500" fill="none" stroke="#111" stroke-linejoin="round"/>
          <g stroke-width="1.800"><path d="M807.500 389.500l1.500-18" stroke="#3f7cba"/><path d="M809.500 363l2.800 8.500h-5.600z" fill="#3f7cba"/><path d="M807.500 389.500l19-1" stroke="#d8175c"/><path d="M834 387.700l-8.500 3v-5.500z" fill="#d8175c"/><path d="M807.500 389.500l-6-5" stroke="#4fa342"/><path d="M796 379l7.500 2.500-4 5z" fill="#4fa342"/></g>
          <g class="plottext" fill="#111">
            <text x="780" y="82">freq(1)=70 Hz</text><text x="895" y="82">Surface: Total acoustic pressure field (Pa)</text>
            <text x="1147" y="133">3</text><text x="1180" y="157">2</text><text x="1211" y="153">m</text><text x="1215" y="181">1</text>
            <text x="1263" y="259">5</text><text x="1271" y="264">0</text><text x="1276" y="301">m</text>
            <text x="1242" y="332">0</text><text x="1238" y="368">0</text><text x="1145" y="398">4</text><text x="1000" y="412">2</text>
            <text x="1039" y="428">m</text><text x="849" y="426">0</text><text x="808" y="358">z</text><text x="790" y="379">y</text><text x="839" y="390">x</text>
          </g>
          <path d="M1247.500 124.500h15v273h-15z" fill="#cbcbcb" stroke="#333"/><path d="M1247.500 259.500h3M1259 259.500h3" stroke="#333"/>
          <path d="M1292 65l15-4 6 4-3 12-8 3-7-3z" fill="#eceef0"/><rect x="1296.500" y="65.500" width="12" height="10" rx="2" fill="#2c75c8" stroke="#14317c" stroke-width="1.500"/><path d="M1302 67h5v7h-4z" fill="#f4e23c"/><path d="M1300 67h3v7h-3z" fill="#9fd6c0"/>
        </svg>
      </div>
    </section>
    <section class="pane eval d-flex flex-column" aria-label="Evaluation">
      <nav class="tabrow d-flex">
        <button class="ptab">Messages<svg><use href="#x"/></svg></button>
        <button class="ptab short">Progress</button>
        <button class="ptab short">Log</button>
        <button class="ptab active">Evaluation 3D<svg><use href="#x"/></svg></button>
      </nav>
      <div class="tools d-flex align-items-center">
        <button class="flatbtn cell" aria-label="Precision"><svg class="ic"><use href="#evopts"/></svg></button>
        <span class="rule"></span>
        <button class="flatbtn cell" aria-label="Full precision"><svg width="18" height="16"><use href="#n1"/></svg></button>
        <button class="flatbtn cell press" aria-label="Automatic notation"><svg><use href="#auto"/></svg></button>
        <button class="flatbtn cell" aria-label="Scientific notation"><svg width="18" height="16"><use href="#n2"/></svg></button>
        <button class="flatbtn cell" aria-label="Engineering notation"><svg width="18" height="16"><use href="#n3"/></svg></button>
        <button class="flatbtn cell" aria-label="Decimal notation"><svg width="18" height="16"><use href="#n4"/></svg></button>
        <span class="rule"></span>
        <button class="flatbtn cell press" aria-label="Table"><svg><use href="#tgrid"/></svg></button>
        <button class="flatbtn cell" aria-label="Polar"><svg class="ic"><use href="#globe"/></svg></button>
        <span class="rule"></span>
        <button class="flatbtn cell" aria-label="Clear"><svg class="ic"><use href="#broom"/></svg></button>
        <button class="flatbtn cell" aria-label="Delete"><svg class="ic"><use href="#trash"/></svg></button>
        <button class="flatbtn cell" aria-label="Table graph"><svg class="ic"><use href="#tgraph"/></svg></button>
        <button class="flatbtn cell" aria-label="Table surface"><svg class="ic"><use href="#sq"/></svg></button>
        <button class="flatbtn cell" aria-label="Copy"><svg class="ic"><use href="#copy"/></svg></button>
        <button class="flatbtn cell" aria-label="Export"><svg class="ic"><use href="#exp"/></svg></button>
        <button class="flatbtn cell" aria-label="Target table"><svg class="ic"><use href="#tbl"/></svg></button>
        <button class="flatbtn cell cr" aria-label="Table menu"><svg width="8" height="8"><use href="#caret"/></svg></button>
      </div>
      <div class="gridwrap">
        <table class="values">
          <thead><tr><th class="c1">x</th><th class="c2">y</th><th class="c3">z</th><th class="c4">Value</th><th></th></tr></thead>
          <tbody><tr><td>2.8597</td><td>1.9492</td><td>2.0000</td><td>0.0000</td><td></td></tr></tbody>
        </table>
      </div>
    </section>
  </div>
</main>
<script src="https://cdn.jsdelivr.net/npm/bootstrap@5.3.0/dist/js/bootstrap.bundle.min.js"></script>
<script>
const nameBox = document.getElementById('lbl');
nameBox.focus();
nameBox.setSelectionRange(nameBox.value.length, nameBox.value.length);
</script>
</body>
</html>
